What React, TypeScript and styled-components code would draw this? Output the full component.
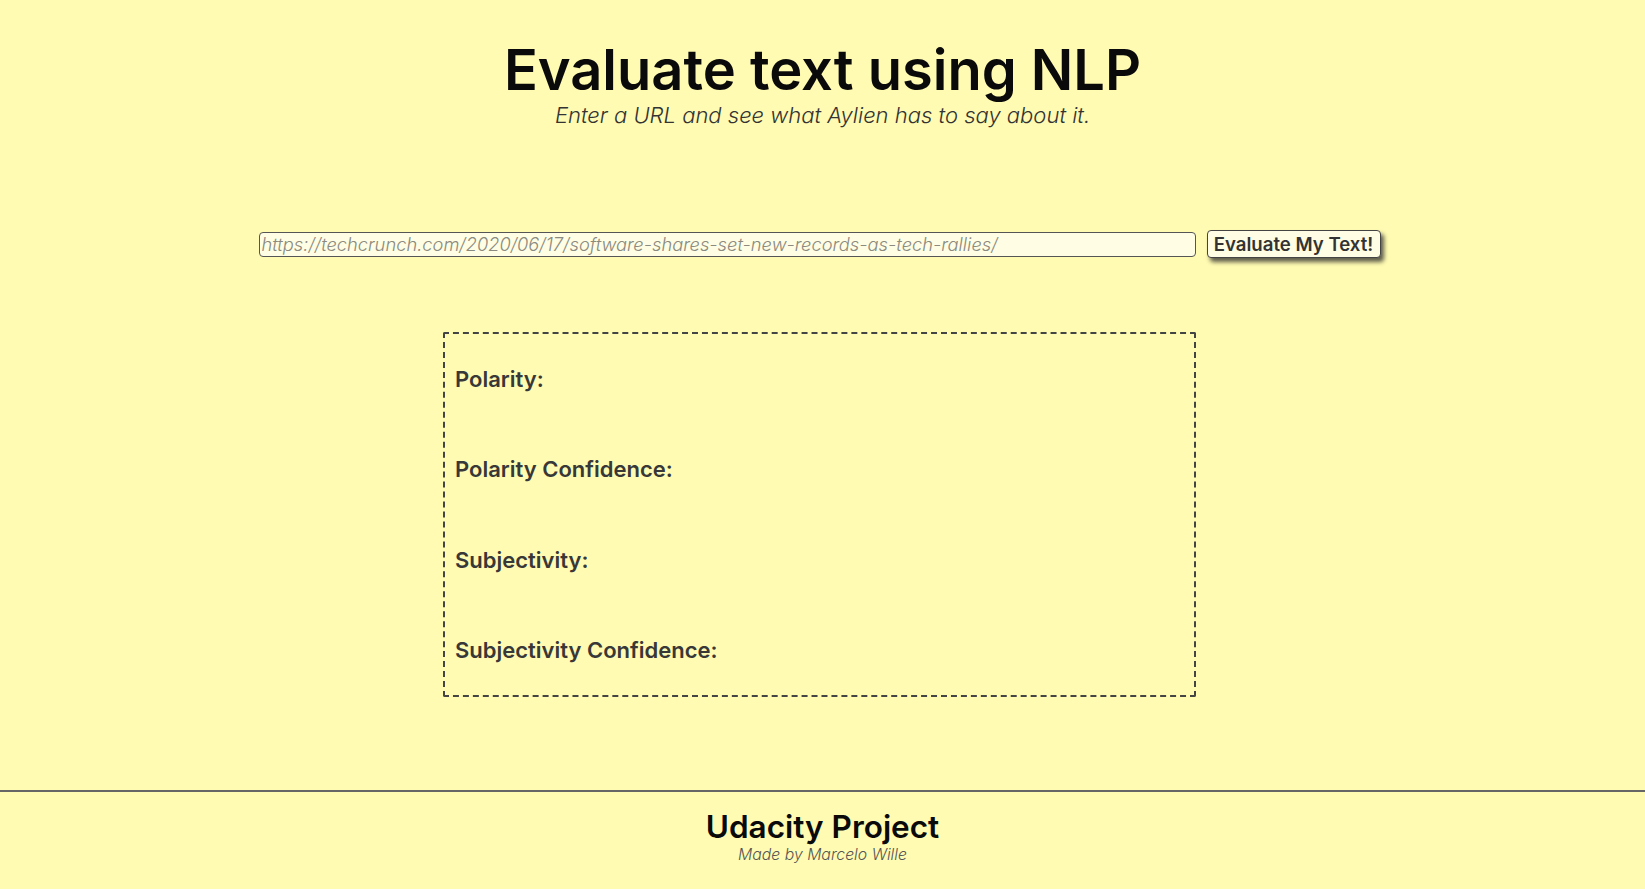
import React from "react";
import styled, { createGlobalStyle } from "styled-components";

const GlobalStyle = createGlobalStyle`
  html, body {
    margin: 0;
    padding: 0;
    background: #fffbb2;
  }
  body {
    font-family: Inter, "Liberation Sans", sans-serif;
    color: #333;
  }
`;

const Page = styled.div`
  min-height: 889px;
  display: flex;
  flex-direction: column;
`;

const Header = styled.header`
  text-align: center;
  padding-top: 38px;
`;

const Title = styled.h1`
  margin: 0;
  font-size: 56px;
  line-height: 64px;
  font-weight: 600;
  color: #0a0a0a;
`;

const Subtitle = styled.p`
  margin: 0;
  font-size: 22px;
  line-height: 26px;
  font-style: italic;
  font-weight: 300;
  color: #333;
`;

const Main = styled.main`
  flex: 1;
  display: flex;
  flex-direction: column;
  align-items: center;
  padding-right: 6px;
`;

const Form = styled.form`
  display: flex;
  align-items: center;
  gap: 11px;
  margin-top: 102px;
`;

const UrlInput = styled.input`
  box-sizing: border-box;
  width: 937px;
  height: 25px;
  padding: 0 2px;
  background: #fffee4;
  border: 1px solid #555;
  border-radius: 4px;
  font-family: inherit;
  font-size: 18.3px;
  font-style: italic;
  font-weight: 300;
  color: #333;
  outline: none;
  &::placeholder {
    color: #8a8a80;
  }
`;

const Button = styled.button`
  box-sizing: border-box;
  height: 28px;
  width: 174px;
  padding: 0;
  background: #fffee4;
  border: 1px solid #444;
  border-radius: 4px;
  box-shadow: 3px 4px 4px rgba(40, 40, 40, 0.75);
  font-family: inherit;
  font-size: 18.6px;
  font-weight: 600;
  color: #333;
  cursor: pointer;
`;

const Results = styled.section`
  box-sizing: border-box;
  width: 753px;
  height: 365px;
  margin-top: 74px;
  border: 2px dashed #444;
  border-radius: 2px;
  padding: 0 10px;
  display: flex;
  flex-direction: column;
`;

const Row = styled.div`
  flex: 1;
  display: flex;
  align-items: center;
  font-size: 22px;
  font-weight: 600;
  color: #383838;
`;

const Footer = styled.footer`
  border-top: 2px solid #666;
  height: 99px;
  box-sizing: border-box;
  padding-top: 17px;
  text-align: center;
`;

const FooterTitle = styled.h2`
  margin: 0;
  font-size: 31.5px;
  line-height: 36px;
  font-weight: 600;
  color: #0a0a0a;
`;

const FooterNote = styled.p`
  margin: 0;
  font-size: 15.8px;
  line-height: 20px;
  font-style: italic;
  font-weight: 300;
  color: #555;
`;

const labels = [
  "Polarity:",
  "Polarity Confidence:",
  "Subjectivity:",
  "Subjectivity Confidence:",
];

export default function App() {
  return (
    <Page>
      <GlobalStyle />
      <Header>
        <Title>Evaluate text using NLP</Title>
        <Subtitle>Enter a URL and see what Aylien has to say about it.</Subtitle>
      </Header>
      <Main>
        <Form onSubmit={(e) => e.preventDefault()}>
          <UrlInput
            type="text"
            placeholder="https://techcrunch.com/2020/06/17/software-shares-set-new-records-as-tech-rallies/"
          />
          <Button type="submit">Evaluate My Text!</Button>
        </Form>
        <Results>
          {labels.map((l) => (
            <Row key={l}>{l}</Row>
          ))}
        </Results>
      </Main>
      <Footer>
        <FooterTitle>Udacity Project</FooterTitle>
        <FooterNote>Made by Marcelo Wille</FooterNote>
      </Footer>
    </Page>
  );
}
